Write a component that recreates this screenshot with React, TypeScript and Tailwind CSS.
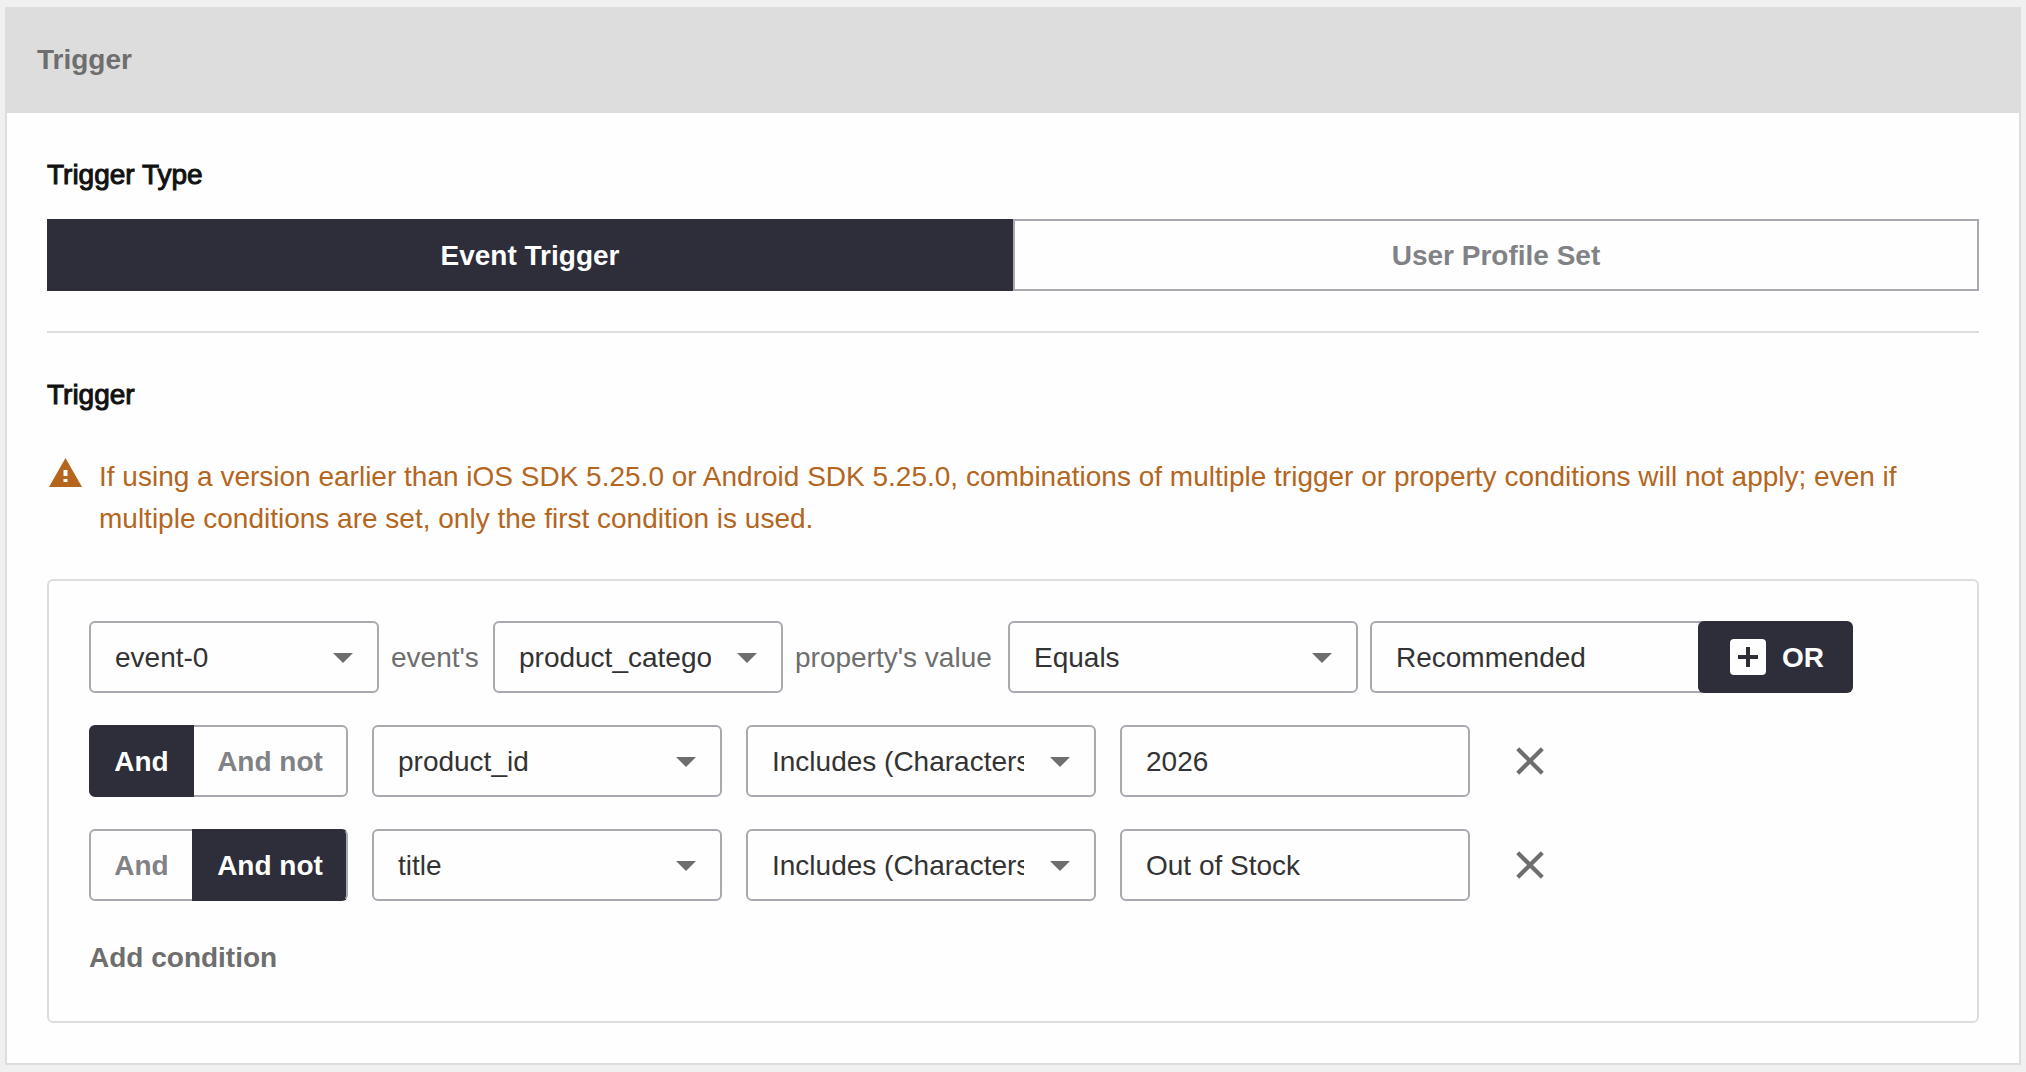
import React from "react";

const fieldBase =
  "h-18 rounded-md border-2 border-[#a9a9af] bg-[#fefefe] pt-0.5 pl-6 text-[28px] text-[#333333] outline-none";

type DropdownProps = {
  label: string;
  value: string;
  className: string;
};

const Dropdown = ({ label, value, className }: DropdownProps) => (
  <div className={`relative shrink-0 ${className}`}>
    <select
      aria-label={label}
      defaultValue={value}
      className={`${fieldBase} w-full appearance-none overflow-hidden pr-[70px] [text-overflow:clip]`}
    >
      <option value={value}>{value}</option>
    </select>
    <svg
      viewBox="0 0 20 10"
      className="pointer-events-none absolute top-8 right-[26px] h-[10px] w-5"
      fill="#6e6e6e"
      aria-hidden="true"
    >
      <path d="M0 0h20L10 10z" />
    </svg>
  </div>
);

type ConditionProps = {
  negated: boolean;
  property: string;
  operator: string;
  value: string;
};

const conditions: ConditionProps[] = [
  { negated: false, property: "product_id", operator: "Includes (Characters)", value: "2026" },
  { negated: true, property: "title", operator: "Includes (Characters)", value: "Out of Stock" },
];

const activeToggle = "relative z-10 border-[#2d2e3a] bg-[#2d2e3a] text-white";
const idleToggle = "border-[#a9a9af] bg-[#fefefe] text-[#818285]";

const ConditionRow = ({ negated, property, operator, value }: ConditionProps) => (
  <div className="flex items-center gap-6">
    <div className="flex shrink-0">
      <button
        type="button"
        aria-pressed={!negated}
        className={`h-18 w-[105px] rounded-l-md border-2 pt-0.5 font-bold ${negated ? idleToggle : activeToggle}`}
      >
        And
      </button>
      <button
        type="button"
        aria-pressed={negated}
        className={`-ml-0.5 h-18 w-[156px] rounded-r-md border-2 pt-0.5 font-bold ${
          negated ? `${activeToggle} border-r-[#a9a9af]` : idleToggle
        }`}
      >
        And not
      </button>
    </div>
    <Dropdown label="Property" value={property} className="w-[350px]" />
    <Dropdown label="Operator" value={operator} className="w-[350px]" />
    <input aria-label="Value" defaultValue={value} className={`${fieldBase} w-[350px] pr-6`} />
    <button type="button" aria-label="Remove condition" className="flex size-18 items-center justify-center">
      <svg viewBox="0 0 28 28" className="size-7" fill="none" stroke="#6e6e6e" strokeWidth="4.2">
        <path d="M1.7 1.7l24.6 24.6M26.3 1.7L1.7 26.3" />
      </svg>
    </button>
  </div>
);

const App = () => {
  return (
    <div className="min-h-screen bg-[#f0f0f0] px-[5px] py-[7px] font-['Liberation_Sans',Arial,sans-serif] text-[28px] leading-[42px]">
      <section className="border-2 border-[#dddddd] bg-[#fefefe]">
        <header className="bg-[#dddddd] px-[30px] pt-[30px] pb-8">
          <h1 className="font-bold text-[#6e6e6e]">Trigger</h1>
        </header>

        <div className="p-10">
          {/* Trigger type */}
          <h2 className="mb-[23px] pt-px text-[#111111] [-webkit-text-stroke:1px_#111111]">Trigger Type</h2>
          <div className="flex">
            <button
              type="button"
              aria-pressed="true"
              className="h-18 flex-1 border-2 border-[#2d2e3a] bg-[#2d2e3a] pt-0.5 font-bold text-white"
            >
              Event Trigger
            </button>
            <button
              type="button"
              aria-pressed="false"
              className="h-18 flex-1 border-2 border-[#a9a9af] pt-0.5 font-bold text-[#818285]"
            >
              User Profile Set
            </button>
          </div>

          <hr className="my-10 border-t-2 border-[#dddddd]" />

          {/* Trigger conditions */}
          <h2 className="pt-px text-[#111111] [-webkit-text-stroke:1px_#111111]">Trigger</h2>
          <div className="mt-10 flex text-[#b4661e]">
            <svg viewBox="0 0 33 29" className="mt-0.5 mr-[17px] ml-0.5 h-[29px] w-[33px] shrink-0" aria-hidden="true">
              <path d="M16.5 0L33 29H0z" fill="#b4661e" />
              <path d="M14.5 12h4v6h-4zM14.5 21h4v3h-4z" fill="#fefefe" />
            </svg>
            <p>
              If using a version earlier than iOS SDK 5.25.0 or Android SDK 5.25.0, combinations of multiple trigger or
              property conditions will not apply; even if multiple conditions are set, only the first condition is used.
            </p>
          </div>

          <div className="mt-[39px] flex flex-col gap-8 rounded-md border-2 border-[#dddddd] p-10">
            <div className="flex items-center gap-3">
              <Dropdown label="Event" value="event-0" className="w-[290px]" />
              <span className="min-w-[90px] shrink-0 pt-0.5 text-[#6e6e6e]">event's</span>
              <Dropdown label="Event property" value="product_category" className="w-[290px]" />
              <span className="min-w-[201px] shrink-0 pt-0.5 text-[#6e6e6e]">property's value</span>
              <Dropdown label="Operator" value="Equals" className="w-[350px]" />
              <div className="flex">
                <input
                  aria-label="Value"
                  defaultValue="Recommended"
                  className={`${fieldBase} w-[336px] rounded-r-none border-r-0 pr-6`}
                />
                <button
                  type="button"
                  className="relative -ml-2 flex h-18 w-[155px] items-center gap-4 rounded-md bg-[#2d2e3a] pl-8 font-bold text-white"
                >
                  <svg viewBox="0 0 36 36" className="size-9" aria-hidden="true">
                    <rect width="36" height="36" rx="4" fill="#fefefe" />
                    <path d="M8 18h20M18 8v20" stroke="#2d2e3a" strokeWidth="4" />
                  </svg>
                  <span className="pt-0.5">OR</span>
                </button>
              </div>
            </div>

            {conditions.map((condition) => (
              <ConditionRow key={condition.property} {...condition} />
            ))}

            <button type="button" className="self-start pt-0.5 leading-[46px] font-bold text-[#6e6e6e]">
              Add condition
            </button>
          </div>
        </div>
      </section>
    </div>
  );
};

export default App;
